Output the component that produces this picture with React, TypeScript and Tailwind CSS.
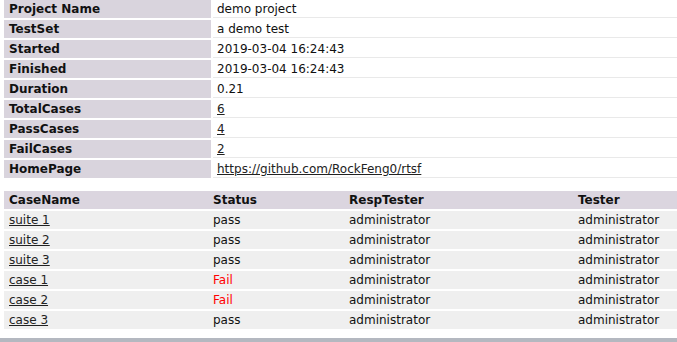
import React from "react";

const info: [string, string, boolean][] = [
  ["Project Name", "demo project", false],
  ["TestSet", "a demo test", false],
  ["Started", "2019-03-04 16:24:43", false],
  ["Finished", "2019-03-04 16:24:43", false],
  ["Duration", "0.21", false],
  ["TotalCases", "6", true],
  ["PassCases", "4", true],
  ["FailCases", "2", true],
  ["HomePage", "https://github.com/RockFeng0/rtsf", true],
];

const cases: [string, string][] = [
  ["suite 1", "pass"],
  ["suite 2", "pass"],
  ["suite 3", "pass"],
  ["case 1", "Fail"],
  ["case 2", "Fail"],
  ["case 3", "pass"],
];

export default function App() {
  return (
    <div
      className="w-[677px] h-[342px] overflow-hidden bg-white text-[12px] text-[#111] relative"
      style={{ fontFamily: '"DejaVu Sans", Verdana, sans-serif' }}
    >
      <div className="pl-[4px] flex flex-col gap-[2px]">
        {info.map(([k, v, link]) => (
          <div key={k} className="flex h-[18px] gap-[2px]">
            <div className="w-[207px] shrink-0 bg-[#d9d4dd] font-bold pl-[5px] leading-[18px]">
              {k}
            </div>
            <div className="flex-1 bg-white border-b border-[#e9e9e9] pl-[4px] leading-[18px]">
              {link ? <span className="underline text-[#222]">{v}</span> : v}
            </div>
          </div>
        ))}
      </div>
      <div className="mt-[13px] pl-[4px] flex flex-col gap-[2px]">
        <div className="flex h-[18px] bg-[#dbd5df] font-bold leading-[18px]">
          <div className="w-[209px] pl-[5px]">CaseName</div>
          <div className="w-[136px]">Status</div>
          <div className="w-[229px]">RespTester</div>
          <div className="flex-1">Tester</div>
        </div>
        {cases.map(([n, s]) => (
          <div key={n} className="flex h-[18px] bg-[#efefef] leading-[18px]">
            <div className="w-[209px] pl-[5px]">
              <span className="underline text-[#222]">{n}</span>
            </div>
            <div className={"w-[136px] " + (s === "Fail" ? "text-[#f00]" : "")}>{s}</div>
            <div className="w-[229px]">administrator</div>
            <div className="flex-1">administrator</div>
          </div>
        ))}
      </div>
      <div className="absolute left-0 right-0 bottom-0 h-[4px] bg-[#b4b8c0]" />
    </div>
  );
}
